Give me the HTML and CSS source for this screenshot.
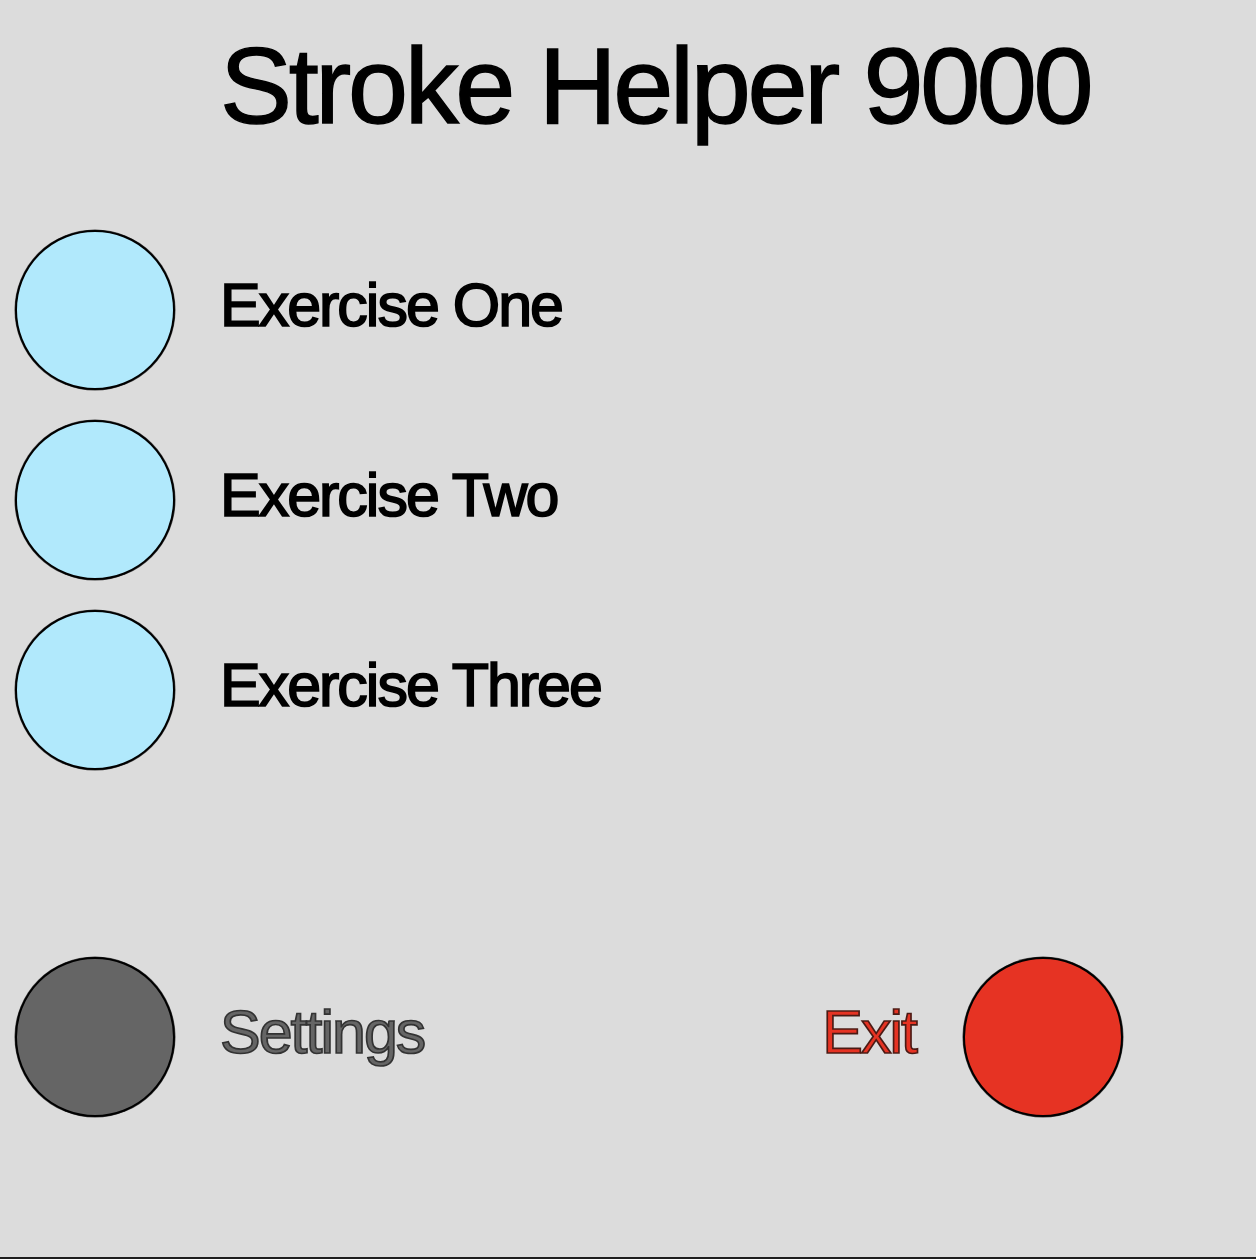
FILE: index.html
```html
<!DOCTYPE html>
<html lang="en">
<head>
<meta charset="utf-8">
<title>Stroke Helper 9000</title>
<link rel="stylesheet" href="styles.css">
</head>
<body>
<div class="screen">
  <h1 class="title">Stroke Helper 9000</h1>
  <ul class="exercises">
    <li class="row">
      <span class="dot dot-blue"></span>
      <span class="label">Exercise One</span>
    </li>
    <li class="row">
      <span class="dot dot-blue"></span>
      <span class="label">Exercise Two</span>
    </li>
    <li class="row">
      <span class="dot dot-blue"></span>
      <span class="label">Exercise Three</span>
    </li>
  </ul>
  <div class="footer">
    <div class="row">
      <span class="dot dot-grey"></span>
      <span class="label label-grey">Settings</span>
    </div>
    <div class="row row-exit">
      <span class="label label-red">Exit</span>
      <span class="dot dot-red"></span>
    </div>
  </div>
</div>
</body>
</html>
```

FILE: styles.css
```css
html, body {
  margin: 0;
  padding: 0;
}

body {
  background: #dcdcdc;
  font-family: "Liberation Sans", Arial, Helvetica, sans-serif;
  color: #000;
}

.screen {
  box-sizing: border-box;
  height: 1259px;
  border-bottom: 2px solid #1e1e1e;
  padding: 32px 0 0 15px;
}

.title {
  margin: 0 0 0 205px;
  font-size: 108px;
  font-weight: normal;
  line-height: 1;
  letter-spacing: -0.031em;
  -webkit-text-stroke: 1.4px #000;
}

.exercises {
  list-style: none;
  margin: 90px 0 0 0;
  padding: 0;
  display: flex;
  flex-direction: column;
  gap: 30px;
}

.row {
  display: flex;
  align-items: center;
  gap: 45px;
}

.dot {
  box-sizing: border-box;
  width: 160px;
  height: 160px;
  border-radius: 50%;
  border: 2px solid #000;
  box-shadow: 0 0 0 0.5px rgba(0, 0, 0, 0.7);
  flex: none;
}

.dot-blue { background: #b1e9fc; }
.dot-grey { background: #656565; }
.dot-red { background: #e63323; }

.label {
  font-size: 61px;
  line-height: 1;
  letter-spacing: -0.033em;
  padding-bottom: 9px;
  -webkit-text-stroke: 1.7px #000;
}

.label-grey {
  color: #656565;
  -webkit-text-stroke: 1.7px #333;
}

.label-red {
  color: #e63323;
  -webkit-text-stroke: 1.7px #4a1a14;
}

.footer {
  margin-top: 187px;
  padding-right: 133px;
  display: flex;
  justify-content: space-between;
}

.row-exit {
  gap: 47px;
}
```
